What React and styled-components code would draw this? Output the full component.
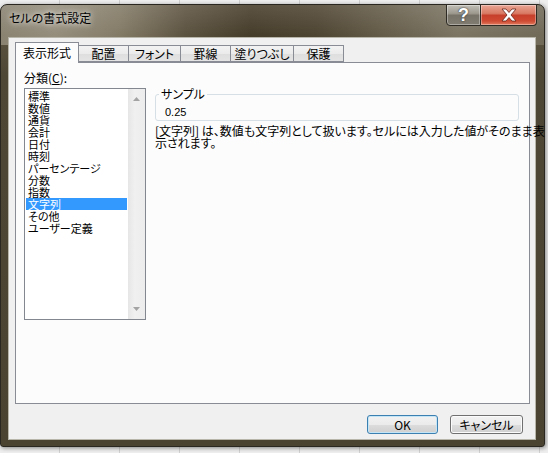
import React from 'react';
import styled, { createGlobalStyle } from 'styled-components';

const GlobalStyle = createGlobalStyle`
  html, body {
    margin: 0;
    padding: 0;
    background: #ececec;
  }
  body {
    font-family: "Noto Sans CJK JP", "Liberation Sans", sans-serif;
    font-size: 12px;
    color: #000;
    font-feature-settings: "palt";
  }
`;

const Desktop = styled.div`
  width: 548px;
  height: 453px;
  box-sizing: border-box;
  padding: 4px 3px 6px 0;
  background:
    repeating-linear-gradient(90deg, transparent 0, transparent 59px, #d0d0d0 59px, #d0d0d0 60px),
    #eeeeee;
`;

const Window = styled.div`
  width: 545px;
  height: 443px;
  box-sizing: border-box;
  border: 1px solid #29271f;
  border-radius: 7px 7px 3px 3px;
  padding: 0 8px 6px 7px;
  display: flex;
  flex-direction: column;
  background:
    linear-gradient(180deg, rgba(255, 255, 255, 0.12) 0, rgba(255, 255, 255, 0) 30px) no-repeat,
    linear-gradient(90deg, #8a8372 0%, #958e7d 10%, #837a66 22%, #5c5240 34%, #463c2a 46%, #4e4432 58%, #645b48 70%, #7c7564 84%, #716a59 100%) top / 100% 40px no-repeat,
    linear-gradient(180deg, #625a46 0, #4f4735 70px, #4b4332 100%);
  box-shadow: 1px 1px 4px rgba(0, 0, 0, 0.45);
`;

const TitleBar = styled.div`
  height: 32px;
  display: flex;
  justify-content: space-between;
  align-items: flex-start;
`;

const Title = styled.div`
  padding: 6px 0 0 1px;
  line-height: 14px;
  font-size: 12px;
  color: #000;
  text-shadow: 0 0 5px rgba(255, 255, 255, 0.85), 0 0 10px rgba(255, 255, 255, 0.55);
`;

const CaptionButtons = styled.div`
  display: flex;
  margin: -1px -1px 0 0;
`;

const CaptionButton = styled.div`
  width: ${p => p.$width}px;
  height: 22px;
  box-sizing: border-box;
  display: flex;
  align-items: center;
  justify-content: center;
  border: 1px solid #2e2b24;
  border-left-width: ${p => (p.$close ? 0 : 1)}px;
  border-radius: ${p => (p.$close ? '0 0 4px 0' : '0 0 0 4px')};
  box-shadow: inset 0 0 0 1px rgba(255, 255, 255, 0.35);
  background: ${p =>
    p.$close
      ? 'linear-gradient(180deg, #e9a594 0%, #d97a64 42%, #c7402b 52%, #cf4a33 80%, #e07b5c 100%)'
      : 'linear-gradient(180deg, #c2bfb8 0%, #9d998f 42%, #777368 52%, #807c71 100%)'};
`;

const HelpGlyph = styled.span`
  font-family: "Liberation Sans", sans-serif;
  font-weight: bold;
  font-size: 18px;
  line-height: 18px;
  color: #fff;
  text-shadow: 0 0 1px #333, 0 0 2px #444;
`;

const Client = styled.div`
  flex: 1;
  box-sizing: border-box;
  border: 1px solid #b8b5ab;
  background: #f0f0f0;
  padding: 4px 5px 0 6px;
  display: flex;
  flex-direction: column;
`;

const TabRow = styled.div`
  display: flex;
  align-items: flex-end;
  height: 20px;
`;

const Tab = styled.div`
  position: relative;
  z-index: ${p => (p.$active ? 2 : 1)};
  width: ${p => p.$width}px;
  height: ${p => (p.$active ? 21 : 17)}px;
  margin-bottom: ${p => (p.$active ? -1 : 0)}px;
  margin-left: -1px;
  box-sizing: border-box;
  border: 1px solid #898c95;
  border-bottom: ${p => (p.$active ? 'none' : '1px solid #898c95')};
  background: ${p => (p.$active ? '#fcfcfc' : 'linear-gradient(180deg, #f3f3f3 0%, #ebebeb 50%, #dedede 51%, #e4e4e4 100%)')};
  display: flex;
  align-items: center;
  justify-content: center;
  font-size: 12px;
  line-height: 12px;
  padding-top: ${p => (p.$active ? 0 : 1)}px;
  &:first-child {
    margin-left: 0;
  }
`;

const Panel = styled.div`
  height: 342px;
  box-sizing: border-box;
  border: 1px solid #898c95;
  background: #fcfcfc;
  padding: 9px 0 0 8px;
  display: flex;
  gap: 9px;
  align-items: flex-start;
`;

const LeftColumn = styled.div`
  display: flex;
  flex-direction: column;
`;

const Label = styled.div`
  line-height: 12px;
  height: 12px;
  margin-bottom: 4px;
  u {
    text-decoration: underline;
    text-underline-offset: 1px;
  }
`;

const ListBox = styled.div`
  width: 122px;
  height: 232px;
  box-sizing: border-box;
  border: 1px solid #828790;
  background: #fff;
  display: flex;
`;

const Items = styled.div`
  flex: 1;
  padding: 1px 1px 0 1px;
`;

const Item = styled.div`
  height: 12px;
  line-height: 12px;
  font-size: 11px;
  padding-left: 2px;
  white-space: nowrap;
  background: ${p => (p.$selected ? '#3399ff' : 'transparent')};
  color: ${p => (p.$selected ? '#fff' : '#000')};
`;

const ScrollBar = styled.div`
  width: 17px;
  background: linear-gradient(90deg, #e6e6e6 0%, #f0f0f0 40%, #ececec 100%);
  display: flex;
  flex-direction: column;
  justify-content: space-between;
  align-items: center;
  padding: 8px 0;
  box-sizing: border-box;
`;

const RightColumn = styled.div`
  width: 364px;
  margin-top: 15px;
`;

const GroupBox = styled.fieldset`
  margin: 0;
  padding: 5px 0 2px 3px;
  border: 1px solid #d5dfe5;
  border-radius: 3px;
  min-inline-size: 0;
`;

const Legend = styled.legend`
  padding: 0 2px;
  line-height: 14px;
  font-size: 12px;
`;

const SampleValue = styled.div`
  padding-left: 6px;
  line-height: 12px;
  font-size: 11px;
  font-family: "Liberation Sans", sans-serif;
`;

const Description = styled.div`
  margin-top: 4px;
  line-height: 12px;
  white-space: nowrap;
`;

const Footer = styled.div`
  display: flex;
  justify-content: flex-end;
  gap: 12px;
  padding: 11px 7px 0 0;
`;

const Button = styled.div`
  width: ${p => p.$width}px;
  height: 19px;
  box-sizing: border-box;
  border: 1px solid ${p => (p.$default ? '#3c7fb1' : '#707070')};
  border-radius: 3px;
  background: linear-gradient(180deg, #f2f2f2 0%, #ebebeb 50%, #dddddd 51%, #cfcfcf 100%);
  box-shadow: inset 0 0 0 1px ${p => (p.$default ? '#c4e5f6' : '#fbfbfb')};
  display: flex;
  align-items: center;
  justify-content: center;
  font-size: 12px;
  line-height: 12px;
`;

const tabs = [
  { label: '表示形式', width: 64, active: true },
  { label: '配置', width: 51 },
  { label: 'フォント', width: 53 },
  { label: '罫線', width: 51 },
  { label: '塗りつぶし', width: 64 },
  { label: '保護', width: 51 },
];

const categories = [
  '標準', '数値', '通貨', '会計', '日付', '時刻',
  'パーセンテージ', '分数', '指数', '文字列', 'その他', 'ユーザー定義',
];

const Arrow = ({ down }) => (
  <svg width="7" height="4" viewBox="0 0 7 4">
    <path d={down ? 'M0 0 L7 0 L3.5 4 Z' : 'M0 4 L7 4 L3.5 0 Z'} fill="#a3a3a3" />
  </svg>
);

const CloseIcon = () => (
  <svg width="18" height="14" viewBox="0 0 18 14">
    <path
      d="M2 1 L6 1 L9 4.5 L12 1 L16 1 L11 7 L16 13 L12 13 L9 9.5 L6 13 L2 13 L7 7 Z"
      fill="#fff"
      stroke="#6a2418"
      strokeWidth="0.8"
      strokeLinejoin="round"
    />
  </svg>
);

export default function App() {
  return (
    <>
      <GlobalStyle />
      <Desktop>
        <Window>
          <TitleBar>
            <Title>セルの書式設定</Title>
            <CaptionButtons>
              <CaptionButton $width={35}>
                <HelpGlyph>?</HelpGlyph>
              </CaptionButton>
              <CaptionButton $width={56} $close>
                <CloseIcon />
              </CaptionButton>
            </CaptionButtons>
          </TitleBar>
          <Client>
            <TabRow>
              {tabs.map(t => (
                <Tab key={t.label} $width={t.width} $active={t.active}>
                  {t.label}
                </Tab>
              ))}
            </TabRow>
            <Panel>
              <LeftColumn>
                <Label>
                  分類(<u>C</u>):
                </Label>
                <ListBox>
                  <Items>
                    {categories.map(c => (
                      <Item key={c} $selected={c === '文字列'}>
                        {c}
                      </Item>
                    ))}
                  </Items>
                  <ScrollBar>
                    <Arrow />
                    <Arrow down />
                  </ScrollBar>
                </ListBox>
              </LeftColumn>
              <RightColumn>
                <GroupBox>
                  <Legend>サンプル</Legend>
                  <SampleValue>0.25</SampleValue>
                </GroupBox>
                <Description>
                  [文字列] は、数値も文字列として扱います。セルには入力した値がそのまま表
                  <br />
                  示されます。
                </Description>
              </RightColumn>
            </Panel>
            <Footer>
              <Button $width={71} $default>OK</Button>
              <Button $width={73}>キャンセル</Button>
            </Footer>
          </Client>
        </Window>
      </Desktop>
    </>
  );
}
